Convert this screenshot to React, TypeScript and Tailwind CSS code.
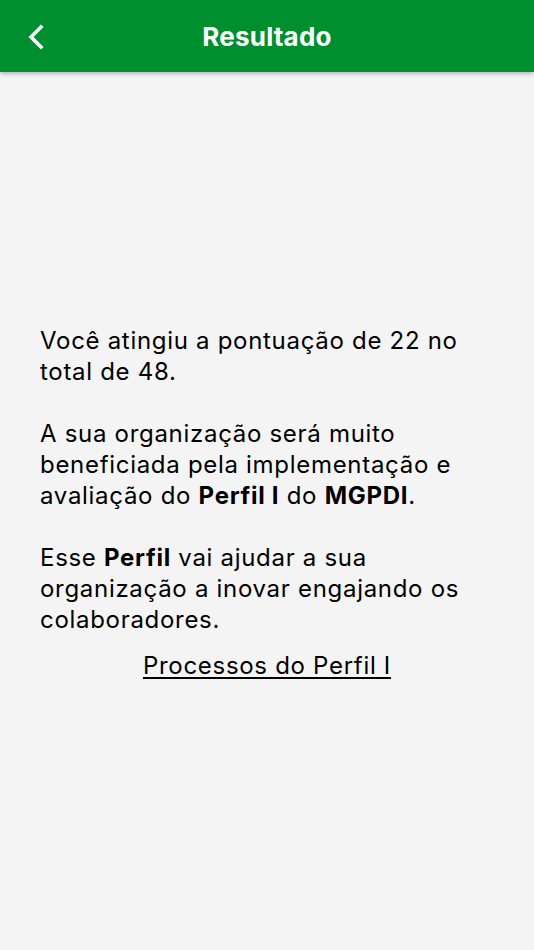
export default function App() {
  return (
    <div
      className="flex min-h-[950px] w-full flex-col bg-[#f4f4f4] text-black"
      style={{ fontFamily: "Inter, 'Noto Sans', sans-serif" }}
    >
      {/* Header */}
      <div className="relative z-10 flex h-[72px] items-center justify-center bg-[#008f2e] shadow-[0_2px_4px_rgba(0,0,0,0.25)]">
        <button className="absolute left-[26px] top-[24px] text-white">
          <svg width="20" height="26" viewBox="0 0 20 26" fill="none">
            <path d="M15 3 L5 13 L15 23" stroke="white" strokeWidth="3.6" strokeLinecap="square" />
          </svg>
        </button>
        <h1 className="text-[26px] font-bold tracking-[0.2px] text-white">Resultado</h1>
      </div>

      {/* Body */}
      <div className="flex flex-1 flex-col px-[40px] pt-[253px] text-[24px] leading-[31px] tracking-[0.7px]">
        <p>Você atingiu a pontuação de 22 no total de 48.</p>
        <p className="mt-[31px]">
          A sua organização será muito beneficiada pela implementação e avaliação do{" "}
          <b>Perfil I</b> do <b>MGPDI</b>.
        </p>
        <p className="mt-[31px]">
          Esse <b>Perfil</b> vai ajudar a sua organização a inovar engajando os colaboradores.
        </p>
        <a className="mt-[15px] self-center underline decoration-[1.5px] underline-offset-[3px]">
          Processos do Perfil I
        </a>
      </div>
    </div>
  );
}
